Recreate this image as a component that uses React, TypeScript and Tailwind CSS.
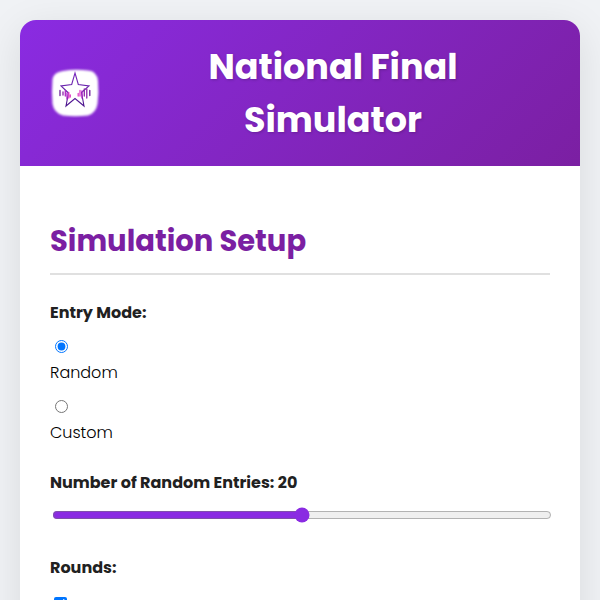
import React, { useState } from 'react';

type EntryMode = 'random' | 'custom';

const MODES: { value: EntryMode; label: string }[] = [
  { value: 'random', label: 'Random' },
  { value: 'custom', label: 'Custom' },
];

const Logo: React.FC = () => (
  <svg viewBox="0 0 50 50" className="h-[50px] w-[50px] shrink-0" role="img" aria-label="Logo">
    <defs>
      <linearGradient id="star" x1="0" y1="0" x2="0" y2="1">
        <stop offset="0" stopColor="#7b2cbf" />
        <stop offset="1" stopColor="#4a148c" />
      </linearGradient>
      <filter id="soft" x="-10%" y="-10%" width="120%" height="120%">
        <feGaussianBlur stdDeviation="0.9" />
      </filter>
    </defs>
    <path
      d="M13 3Q25 .8 38 2.5Q47 3 48 13Q49 25 47.5 36Q46 45 38 47.5Q25 49 13 47.5Q4 45 2.5 36Q1.5 24 2.5 11Q4 4 13 3Z"
      fill="#fff"
      filter="url(#soft)"
    />
    <path
      d="M25 5L28.3 16.5L39 18L31.5 24.5L34 38L25 30.5L16 38L18.5 25L11 18L21.7 16.5Z"
      fill="none"
      stroke="url(#star)"
      strokeWidth="1.1"
    />
    <g strokeWidth="1.3" strokeLinecap="round">
      <path d="M10 22.5V27.5M39.8 22.5V27.5" stroke="#6a1b9a" />
      <path d="M13 24V27M36.8 21V30M34.3 21V28" stroke="#8e24aa" />
      <path d="M15.3 22.5V28M17 25V31M32 23V30" stroke="#b026c8" />
      <path d="M18.8 24.5V30M20.3 27V29M30 22.5V28M28.2 25.5V28" stroke="#e040c8" />
    </g>
  </svg>
);

export default function App() {
  const [mode, setMode] = useState<EntryMode>('random');
  const [entries, setEntries] = useState(20);

  return (
    <div className="min-h-screen bg-[#f0f2f5] p-5 font-['Poppins',Inter,sans-serif] text-base/[26px] text-[#212121]">
      <div className="mx-auto max-w-[1200px] overflow-hidden rounded-2xl bg-white shadow-[0_10px_40px_rgba(0,0,0,0.1)]">
        <header className="flex items-center bg-linear-135 from-[#8a2be2] to-[#7b1fa2] px-[30px] py-5">
          <Logo />
          <h1 className="grow pr-5 pl-9 text-center text-[35px]/[53px] font-bold text-white text-shadow-[1px_1px_3px_rgba(0,0,0,0.2)]">
            National Final
            <br />
            Simulator
          </h1>
        </header>

        <main className="px-[30px] pt-[54px] pb-[30px]">
          <h2 className="mb-[25px] border-b-2 border-[#e0e0e0] pb-[10px] text-[29px]/[43px] font-bold text-[#7b1fa2]">
            Simulation Setup
          </h2>

          <fieldset className="mb-6">
            <legend className="mb-[14px] font-bold">Entry Mode:</legend>
            <div className="flex flex-col gap-[14px]">
              {MODES.map(({ value, label }) => (
                <label key={value} className="flex flex-col items-start gap-[7px] font-light text-black">
                  <input
                    type="radio"
                    name="mode"
                    value={value}
                    checked={mode === value}
                    onChange={() => setMode(value)}
                    className="ml-[5px] h-[13px] w-[13px]"
                  />
                  {label}
                </label>
              ))}
            </div>
          </fieldset>

          <div className="mb-8">
            <label htmlFor="entries" className="mb-[11px] block font-bold">
              Number of Random Entries: {entries}
            </label>
            <input
              id="entries"
              type="range"
              min={5}
              max={35}
              value={entries}
              onChange={(e) => setEntries(Number(e.target.value))}
              className="ml-[2px] block h-4 w-full accent-[#8a2be2]"
            />
          </div>

          <fieldset>
            <legend className="mb-4 font-bold">Rounds:</legend>
            <input type="checkbox" defaultChecked aria-label="Enable rounds" className="ml-1 block h-[13px] w-[13px]" />
          </fieldset>
        </main>
      </div>
    </div>
  );
}
